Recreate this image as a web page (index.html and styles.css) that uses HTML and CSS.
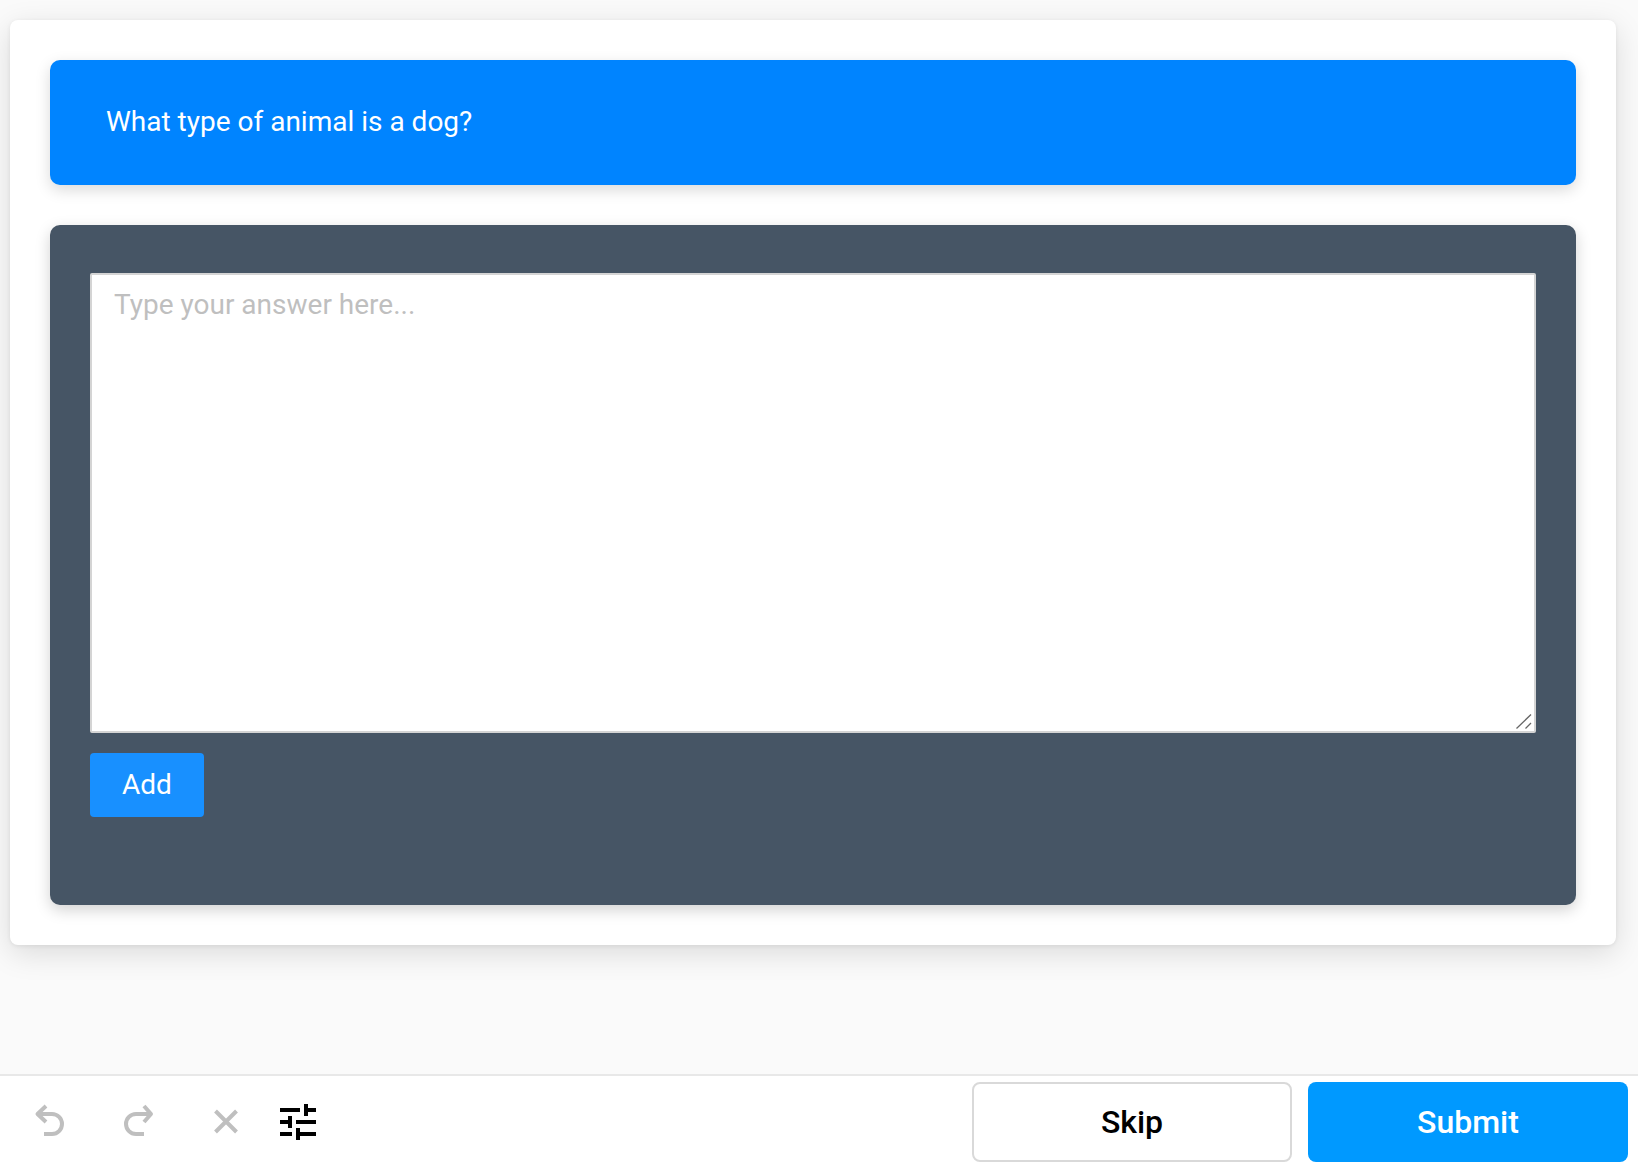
FILE: index.html
```html
<!DOCTYPE html>
<html lang="en">
<head>
<meta charset="utf-8">
<title>Question</title>
<link rel="stylesheet" href="styles.css">
</head>
<body>
<main class="main">
  <section class="card">
    <div class="question">What type of animal is a dog?</div>
    <div class="answer">
      <div class="field">
        <textarea class="input" placeholder="Type your answer here..."></textarea>
        <svg class="grip" viewBox="0 0 16 15"><path d="M0.500 14.500L15 0.500M9.500 14.500L15 9"/></svg>
      </div>
      <button class="add" type="button">Add</button>
    </div>
  </section>
</main>
<footer class="footer">
  <div class="tools">
    <button class="tool" type="button" aria-label="Undo">
      <svg class="tool-svg muted" viewBox="0 0 88 88"><path d="M40 30l-8.500 8 8.500 8M32 38h14a10 10 0 0 1 0 20h-8"/></svg>
    </button>
    <button class="tool" type="button" aria-label="Redo">
      <svg class="tool-svg muted" viewBox="0 0 88 88"><path d="M50 30l7 8-7 8M57 38H42a10 10 0 0 0 0 20h8"/></svg>
    </button>
    <button class="tool" type="button" aria-label="Clear">
      <svg class="tool-svg muted" viewBox="0 0 88 88"><path d="M33.500 35l21 21M54.500 35l-21 21"/></svg>
    </button>
    <button class="tool tune" type="button" aria-label="Settings">
      <svg class="tune-svg" viewBox="0 0 24 24"><path d="M3 17v2h6v-2H3zM3 5v2h10V5H3zm10 16v-2h8v-2h-8v-2h-2v6h2zM7 9v2H3v2h4v2h2V9H7zm14 4v-2H11v2h10zm-6-4h2V7h4V5h-4V3h-2v6z"/></svg>
    </button>
  </div>
  <div class="actions">
    <button class="action skip" type="button">Skip</button>
    <button class="action submit" type="button">Submit</button>
  </div>
</footer>
</body>
</html>
```

FILE: styles.css
```css
* { box-sizing: border-box; }
html, body { margin: 0; height: 100%; }
body {
  display: flex;
  flex-direction: column;
  height: 1164px;
  overflow: hidden;
  background: #fafafa;
  font-family: Roboto, "Liberation Sans", sans-serif;
}
.main {
  flex: 1;
  padding: 20px 22px 0 10px;
}
.card {
  display: flex;
  flex-direction: column;
  gap: 40px;
  height: 925px;
  padding: 40px;
  background: #fff;
  border-radius: 8px;
  box-shadow: 0 8px 30px rgba(0, 0, 0, .13), 0 1px 4px rgba(0, 0, 0, .07);
}
.question {
  display: flex;
  align-items: center;
  height: 125px;
  padding: 0 56px 2px;
  color: #fff;
  font-size: 28px;
  background: #0084ff;
  border-radius: 10px;
  box-shadow: 0 5px 15px rgba(0, 0, 0, .15);
}
.answer {
  height: 680px;
  padding: 48px 40px 0;
  background: #465565;
  border-radius: 10px;
  box-shadow: 0 5px 15px rgba(0, 0, 0, .18);
}
.field {
  position: relative;
}
.input {
  display: block;
  width: 100%;
  height: 460px;
  padding: 13px 22px;
  font: 28px/1.2 Roboto, "Liberation Sans", sans-serif;
  border: 2px solid #d4d4d4;
  border-radius: 2px;
  background: #fff;
  outline: 0;
  resize: none;
}
.input::placeholder { color: #bfbfbf; }
.grip {
  position: absolute;
  right: 4px;
  bottom: 4px;
  width: 16px;
  height: 15px;
  fill: none;
  stroke: #666;
  stroke-width: 1.3;
  pointer-events: none;
}
.add {
  display: block;
  width: 114px;
  height: 64px;
  margin-top: 20px;
  padding: 0 0 2px;
  color: #fff;
  font: 28px Roboto, "Liberation Sans", sans-serif;
  background: #1890ff;
  border: 0;
  border-radius: 4px;
}
.footer {
  display: flex;
  justify-content: space-between;
  height: 90px;
  padding-right: 10px;
  background: #fff;
  border-top: 2px solid #e8e8e8;
}
.tools {
  display: flex;
  padding-left: 6px;
}
.tool {
  width: 88px;
  height: 88px;
  padding: 0;
  background: none;
  border: 0;
}
.tool-svg {
  display: block;
  width: 88px;
  height: 88px;
  fill: none;
  stroke-width: 4;
  stroke-linejoin: round;
}
.muted { stroke: #bfbfbf; }
.tune {
  width: 48px;
  margin-left: 4px;
}
.tune-svg {
  display: block;
  width: 48px;
  height: 48px;
  margin-top: 4px;
  fill: #000;
}
.actions {
  display: flex;
  gap: 16px;
  padding-top: 6px;
}
.action {
  width: 320px;
  height: 80px;
  padding: 0;
  font: 500 32px Roboto, "Liberation Sans", sans-serif;
  border-radius: 8px;
}
.skip {
  color: #000;
  background: #fff;
  border: 2px solid #d9d9d9;
}
.submit {
  color: #fff;
  background: #09f;
  border: 0;
}
```
